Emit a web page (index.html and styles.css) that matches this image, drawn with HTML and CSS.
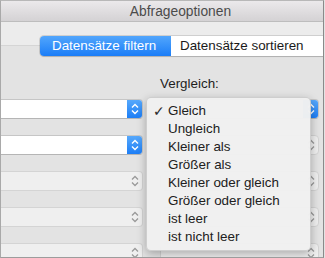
FILE: index.html
```html
<!DOCTYPE html>
<html>
<head>
<meta charset="utf-8">
<link rel="stylesheet" href="styles.css">
</head>
<body>
<div class="window">
  <div class="titlebar">Abfrageoptionen</div>
  <div class="content">
    <div class="segrow">
      <div class="seg">
        <div class="seg-item active">Datensätze filtern</div>
        <div class="seg-item">Datensätze sortieren</div>
      </div>
    </div>
    <div class="labelrow"><span class="label">Vergleich:</span></div>
    <div class="rows">
      <div class="sel left"><span class="step blue"><svg width="16" height="20" viewBox="0 0 16 20"><path d="M5 8.5 L8 5.5 L11 8.5 M5 11.5 L8 14.5 L11 11.5" fill="none" stroke="#fff" stroke-width="1.4"/></svg></span></div>
      <div class="sel right"><span class="step blue"><svg width="16" height="20" viewBox="0 0 16 20"><path d="M5 8.5 L8 5.5 L11 8.5 M5 11.5 L8 14.5 L11 11.5" fill="none" stroke="#fff" stroke-width="1.4"/></svg></span></div>
      <div class="sel left"><span class="step blue"><svg width="16" height="20" viewBox="0 0 16 20"><path d="M5 8.5 L8 5.5 L11 8.5 M5 11.5 L8 14.5 L11 11.5" fill="none" stroke="#fff" stroke-width="1.4"/></svg></span></div>
      <div class="sel right dis"><span class="step"><svg width="16" height="20" viewBox="0 0 16 20"><path d="M5 8.5 L8 5.5 L11 8.5 M5 11.5 L8 14.5 L11 11.5" fill="none" stroke="#9a9a9a" stroke-width="1.3"/></svg></span></div>
      <div class="sel left dis"><span class="step"><svg width="16" height="20" viewBox="0 0 16 20"><path d="M5 8.5 L8 5.5 L11 8.5 M5 11.5 L8 14.5 L11 11.5" fill="none" stroke="#9a9a9a" stroke-width="1.3"/></svg></span></div>
      <div class="sel right dis"><span class="step"><svg width="16" height="20" viewBox="0 0 16 20"><path d="M5 8.5 L8 5.5 L11 8.5 M5 11.5 L8 14.5 L11 11.5" fill="none" stroke="#9a9a9a" stroke-width="1.3"/></svg></span></div>
      <div class="sel left dis"><span class="step"><svg width="16" height="20" viewBox="0 0 16 20"><path d="M5 8.5 L8 5.5 L11 8.5 M5 11.5 L8 14.5 L11 11.5" fill="none" stroke="#9a9a9a" stroke-width="1.3"/></svg></span></div>
      <div class="sel right dis"><span class="step"><svg width="16" height="20" viewBox="0 0 16 20"><path d="M5 8.5 L8 5.5 L11 8.5 M5 11.5 L8 14.5 L11 11.5" fill="none" stroke="#9a9a9a" stroke-width="1.3"/></svg></span></div>
      <div class="sel left dis"><span class="step"><svg width="16" height="20" viewBox="0 0 16 20"><path d="M5 8.5 L8 5.5 L11 8.5 M5 11.5 L8 14.5 L11 11.5" fill="none" stroke="#9a9a9a" stroke-width="1.3"/></svg></span></div>
      <div class="sel right dis"><span class="step"><svg width="16" height="20" viewBox="0 0 16 20"><path d="M5 8.5 L8 5.5 L11 8.5 M5 11.5 L8 14.5 L11 11.5" fill="none" stroke="#9a9a9a" stroke-width="1.3"/></svg></span></div>
    </div>
    <ul class="menu">
      <li class="checked"><span class="check">✓</span>Gleich</li>
      <li>Ungleich</li>
      <li>Kleiner als</li>
      <li>Größer als</li>
      <li>Kleiner oder gleich</li>
      <li>Größer oder gleich</li>
      <li>ist leer</li>
      <li>ist nicht leer</li>
    </ul>
  </div>
</div>
</body>
</html>
```

FILE: styles.css
```css
html, body {
  margin: 0;
  padding: 0;
}
body {
  width: 325px;
  height: 258px;
  overflow: hidden;
  background: #e3e3e3;
  font-family: "Liberation Sans", Arial, sans-serif;
  font-size: 13.4px;
  color: #1e1e1e;
}
.window {
  box-sizing: border-box;
  width: 324px;
  height: 258px;
  border-left: 1px solid #a9a9a9;
  border-right: 1px solid #8a8a8a;
  border-bottom: 1px solid #9c9c9c;
  border-top: 1px solid #b8b8b8;
  display: flex;
  flex-direction: column;
  overflow: hidden;
}
.titlebar {
  height: 20px;
  line-height: 21px;
  border-bottom: 1px solid #bdbdbd;
  background: linear-gradient(#ebe9eb, #d4d2d4);
  color: #4b4b4b;
  text-align: center;
  padding-left: 37px;
  font-size: 13.8px;
}
.content {
  position: relative;
  flex: 1;
  background: linear-gradient(#ececec 0, #ececec 23px, #d5d5d5 23px, #d5d5d5 24px, #e3e3e3 24px);
}
.segrow {
  padding-top: 14px;
  padding-left: 39px;
  display: flex;
}
.seg {
  display: flex;
  height: 20px;
  border-radius: 4px;
  box-shadow: 0 0 0 1px rgba(0,0,0,0.12), 0 1px 1px rgba(0,0,0,0.12);
  overflow: hidden;
  width: 300px;
  flex: none;
}
.seg-item {
  line-height: 20px;
  white-space: nowrap;
  background: #fff;
  color: #1a1a1a;
  padding-left: 9px;
  flex: 1;
}
.seg-item.active {
  flex: none;
  width: 119px;
  padding-left: 12px;
  background: linear-gradient(#52a6fc, #1b7df7);
  color: #fff;
}
.labelrow {
  margin-top: 20px;
  padding-left: 159px;
  height: 16px;
  line-height: 16px;
}
.label {
  color: #1e1e1e;
}
.rows {
  margin-top: 7px;
  display: grid;
  grid-template-columns: 142px 159px;
  column-gap: 17px;
  row-gap: 16px;
  grid-auto-rows: 20px;
}
.sel {
  box-sizing: border-box;
  height: 20px;
  background: #fff;
  border: 1px solid #c6c6c6;
  border-bottom-color: #b5b5b5;
  border-radius: 4px;
  display: flex;
  justify-content: flex-end;
  position: relative;
  overflow: hidden;
}
.sel.left {
  border-left: none;
  border-radius: 0 4px 4px 0;
}
.sel.dis {
  background: #efefef;
  border-color: #d4d4d4;
}
.step {
  width: 16px;
  height: 20px;
  margin: -1px -1px -1px 0;
  display: block;
  flex: none;
}
.step svg {
  display: block;
}
.step.blue {
  background: linear-gradient(#5aabfc, #1a7cf6);
  border-radius: 0 4px 4px 0;
}
.menu {
  position: absolute;
  left: 145px;
  top: 75px;
  width: 165px;
  box-sizing: border-box;
  margin: 0;
  padding: 4px 0;
  list-style: none;
  background: rgba(240, 240, 240, 0.98);
  border: 1px solid rgba(0,0,0,0.14);
  border-radius: 5px;
  box-shadow: 0 3px 10px rgba(0,0,0,0.28);
}
.menu li {
  height: 18px;
  line-height: 18px;
  padding-left: 21px;
  position: relative;
  color: #202020;
  white-space: nowrap;
}
.check {
  position: absolute;
  left: 6px;
  top: 0;
  font-family: "DejaVu Sans", sans-serif;
  font-size: 14px;
  font-weight: bold;
  color: #2a2a2a;
}
```
